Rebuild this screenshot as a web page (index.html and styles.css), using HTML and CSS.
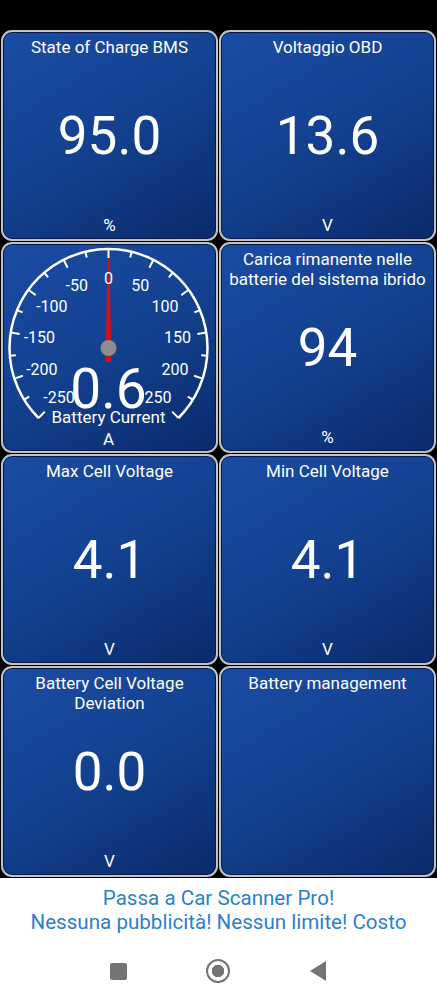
FILE: index.html
```html
<!DOCTYPE html>
<html lang="it">
<head>
  <meta charset="UTF-8">
  <title>Car Scanner - Dashboard</title>
  <link rel="stylesheet" href="styles.css">
</head>
<body>
  <div class="screen">
    <div class="status-bar"></div>

    <main class="dash">
      <section class="tile">
        <h2 class="tile-title">State of Charge BMS</h2>
        <div class="tile-value">95.0</div>
        <div class="tile-unit">%</div>
      </section>
      <section class="tile">
        <h2 class="tile-title">Voltaggio OBD</h2>
        <div class="tile-value">13.6</div>
        <div class="tile-unit">V</div>
      </section>

      <!-- gauge: -250..250 A over 270 degrees, 27 deg per 50 A -->
      <section class="tile tile-gauge">
        <svg class="gauge" viewBox="0 0 213 207">
          <path class="gauge-arc" d="M35.5 174 A99 99 0 1 1 175.5 174"/>
          <g class="gauge-ticks">
            <line x1="105.5" y1="5" x2="105.5" y2="14" transform="rotate(-135 105.5 104)"/>
            <line x1="105.5" y1="5" x2="105.5" y2="11" transform="rotate(-121.5 105.5 104)"/>
            <line x1="105.5" y1="5" x2="105.5" y2="14" transform="rotate(-108 105.5 104)"/>
            <line x1="105.5" y1="5" x2="105.5" y2="11" transform="rotate(-94.5 105.5 104)"/>
            <line x1="105.5" y1="5" x2="105.5" y2="14" transform="rotate(-81 105.5 104)"/>
            <line x1="105.5" y1="5" x2="105.5" y2="11" transform="rotate(-67.5 105.5 104)"/>
            <line x1="105.5" y1="5" x2="105.5" y2="14" transform="rotate(-54 105.5 104)"/>
            <line x1="105.5" y1="5" x2="105.5" y2="11" transform="rotate(-40.5 105.5 104)"/>
            <line x1="105.5" y1="5" x2="105.5" y2="14" transform="rotate(-27 105.5 104)"/>
            <line x1="105.5" y1="5" x2="105.5" y2="11" transform="rotate(-13.5 105.5 104)"/>
            <line x1="105.5" y1="5" x2="105.5" y2="14"/>
            <line x1="105.5" y1="5" x2="105.5" y2="11" transform="rotate(13.5 105.5 104)"/>
            <line x1="105.5" y1="5" x2="105.5" y2="14" transform="rotate(27 105.5 104)"/>
            <line x1="105.5" y1="5" x2="105.5" y2="11" transform="rotate(40.5 105.5 104)"/>
            <line x1="105.5" y1="5" x2="105.5" y2="14" transform="rotate(54 105.5 104)"/>
            <line x1="105.5" y1="5" x2="105.5" y2="11" transform="rotate(67.5 105.5 104)"/>
            <line x1="105.5" y1="5" x2="105.5" y2="14" transform="rotate(81 105.5 104)"/>
            <line x1="105.5" y1="5" x2="105.5" y2="11" transform="rotate(94.5 105.5 104)"/>
            <line x1="105.5" y1="5" x2="105.5" y2="14" transform="rotate(108 105.5 104)"/>
            <line x1="105.5" y1="5" x2="105.5" y2="11" transform="rotate(121.5 105.5 104)"/>
            <line x1="105.5" y1="5" x2="105.5" y2="14" transform="rotate(135 105.5 104)"/>
          </g>
          <polygon class="gauge-needle" points="102.5,118 108.5,118 106.5,14 104.5,14"/>
          <g class="gauge-labels">
            <text x="105.5" y="34">0</text>
            <text x="137.3" y="41.6">50</text>
            <text x="162.1" y="62.8">100</text>
            <text x="174.6" y="93.1">150</text>
            <text x="172.1" y="125.6">200</text>
            <text x="155" y="153.5">250</text>
            <text x="73.7" y="41.6">-50</text>
            <text x="48.9" y="62.8">-100</text>
            <text x="36.4" y="93.1">-150</text>
            <text x="38.9" y="125.6">-200</text>
            <text x="56" y="153.5">-250</text>
          </g>
          <circle class="gauge-hub" cx="105.5" cy="104" r="8"/>
          <text class="gauge-value" x="105.5" y="164">0.6</text>
          <text class="gauge-name" x="105.5" y="179">Battery Current</text>
          <text class="gauge-unit" x="105.5" y="201">A</text>
        </svg>
      </section>

      <section class="tile">
        <h2 class="tile-title">Carica rimanente nelle batterie del sistema ibrido</h2>
        <div class="tile-value">94</div>
        <div class="tile-unit">%</div>
      </section>
      <section class="tile">
        <h2 class="tile-title">Max Cell Voltage</h2>
        <div class="tile-value">4.1</div>
        <div class="tile-unit">V</div>
      </section>
      <section class="tile">
        <h2 class="tile-title">Min Cell Voltage</h2>
        <div class="tile-value">4.1</div>
        <div class="tile-unit">V</div>
      </section>
      <section class="tile">
        <h2 class="tile-title">Battery Cell Voltage Deviation</h2>
        <div class="tile-value">0.0</div>
        <div class="tile-unit">V</div>
      </section>
      <section class="tile">
        <h2 class="tile-title">Battery management</h2>
        <div class="tile-value"></div>
        <div class="tile-unit"></div>
      </section>
    </main>

    <div class="promo">
      <p>Passa a Car Scanner Pro!</p>
      <p>Nessuna pubblicità! Nessun limite! Costo</p>
    </div>

    <nav class="nav-bar">
      <span class="nav-recent"></span>
      <span class="nav-home"></span>
      <svg class="nav-back" viewBox="0 0 16 20"><polygon points="16,0 16,20 0,10"/></svg>
    </nav>
  </div>
</body>
</html>
```

FILE: styles.css
```css
body {
    margin: 0;
    background: #000;
    font-family: Roboto, "Noto Sans", sans-serif;
}

.screen {
    width: 437px;
    height: 1000px;
    display: flex;
    flex-direction: column;
}

.status-bar {
    height: 30px;
    background: #000;
}

/******************* tiles *******************/

.dash {
    display: grid;
    grid-template-columns: 1fr 1fr;
    grid-auto-rows: 211px;
    gap: 1px;
    padding: 0 1px;
}

.tile {
    display: grid;
    grid-template-rows: 1fr auto 1fr;
    border: 2px solid #c3c3c3;
    border-radius: 11px;
    box-shadow: inset 0 0 0 1px #07184a;
    background: linear-gradient(150deg, #1a4ca5 0%, #13418f 50%, #0a2a6c 100%);
    color: #fff;
    text-align: center;
    overflow: hidden;
}

.tile-title {
    align-self: start;
    margin: 0;
    padding: 5px 4px 0;
    font-size: 17px;
    font-weight: normal;
    line-height: 20px;
}

.tile-value {
    font-size: 53px;
    line-height: 60px;
}

.tile-unit {
    align-self: end;
    padding-bottom: 4px;
    font-size: 17px;
    line-height: 20px;
}

/******************* gauge *******************/

.tile-gauge {
    display: block;
}

.gauge {
    display: block;
    width: 100%;
    height: 100%;
    font-family: Roboto, sans-serif;
}

.gauge-arc {
    fill: none;
    stroke: #fff;
    stroke-width: 2.5;
}

.gauge-ticks line {
    stroke: #fff;
    stroke-width: 2;
}

.gauge-needle {
    fill: #d0101c;
}

.gauge-hub {
    fill: #8d8d8d;
}

.gauge-labels text {
    fill: #fff;
    font-size: 16px;
    text-anchor: middle;
    dominant-baseline: central;
}

.gauge-value,
.gauge-name,
.gauge-unit {
    fill: #fff;
    text-anchor: middle;
}

.gauge-value {
    font-size: 55px;
}

.gauge-name,
.gauge-unit {
    font-size: 17px;
}

/******************* promo + nav *******************/

.promo {
    margin-top: 1px;
    padding: 8px 0;
    background: #fff;
    color: #2d80c8;
    font-size: 20.6px;
    line-height: 24px;
    text-align: center;
    white-space: nowrap;
}

.promo p {
    margin: 0;
}

.nav-bar {
    flex: 1;
    display: flex;
    justify-content: center;
    align-items: center;
    gap: 76px;
    background: #fff;
}

.nav-recent {
    width: 17px;
    height: 17px;
    margin: 0 3px;
    border-radius: 2px;
    background: #747474;
}

.nav-home {
    box-sizing: border-box;
    width: 24px;
    height: 24px;
    border: 2.5px solid #747474;
    border-radius: 50%;
    background: radial-gradient(circle, #747474 0 6px, #fff 6.5px);
}

.nav-back {
    width: 16px;
    height: 20px;
    margin: 0 4px;
    fill: #747474;
}
```
